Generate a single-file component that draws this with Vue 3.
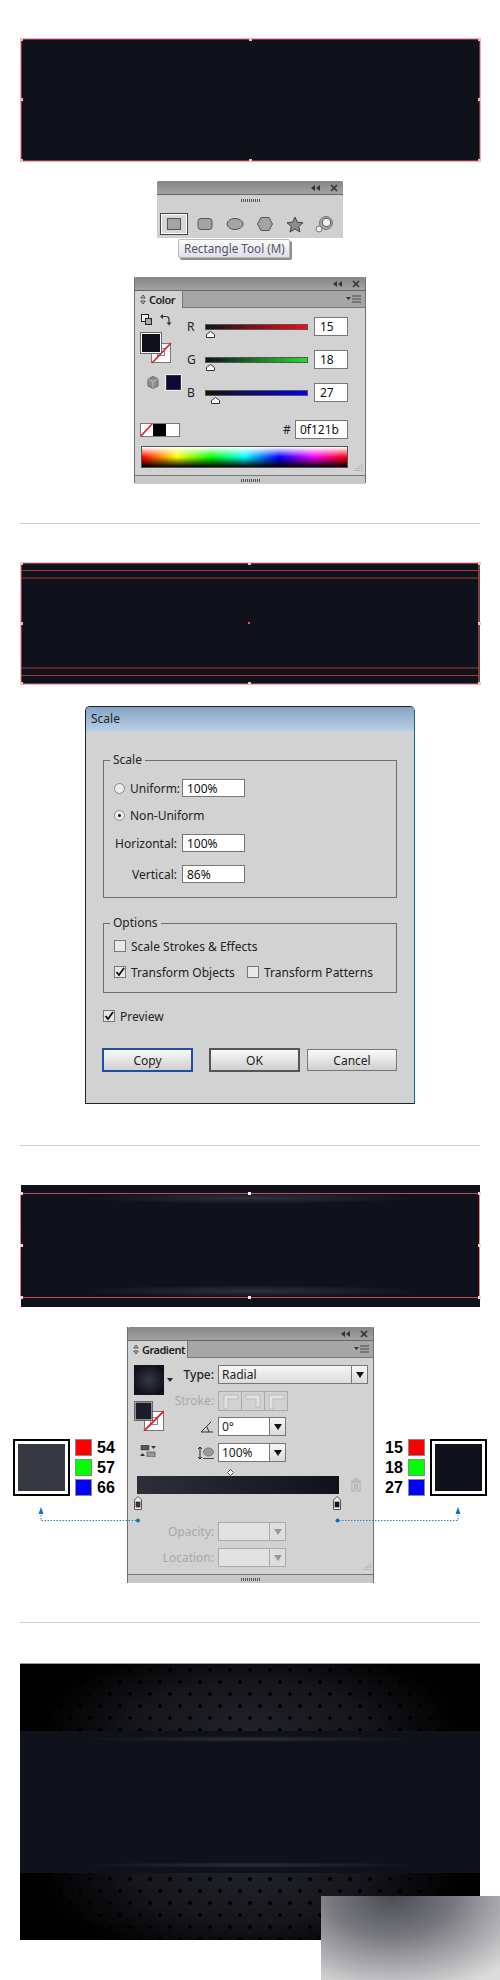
<script setup>
const sliders = [
  { label: 'R', value: '15', thumb: 1, track: 'linear-gradient(90deg,#0f121b,#ff0a14)' },
  { label: 'G', value: '18', thumb: 1, track: 'linear-gradient(90deg,#0f0f1b,#22e02a)' },
  { label: 'B', value: '27', thumb: 6, track: 'linear-gradient(90deg,#141400,#0000ff)' },
]
const leftVals = [['54', '#ff0000'], ['57', '#00ff00'], ['66', '#0000ff']]
const rightVals = [['15', '#ff0000'], ['18', '#00ff00'], ['27', '#0000ff']]
</script>

<template>
  <div class="page">
    <!-- Step 1 -->
    <div class="art art1">
      <svg class="sel" width="461" height="124" viewBox="0 0 461 124">
        <rect x="1" y="1" width="459" height="122" fill="none" stroke="#e8606a" />
        <g fill="#f6b9b9">
          <rect x="0" y="0" width="3" height="3" /><rect x="229" y="0" width="3" height="3" /><rect x="458" y="0" width="3" height="3" />
          <rect x="0" y="60" width="3" height="3" /><rect x="458" y="60" width="3" height="3" />
          <rect x="0" y="121" width="3" height="3" /><rect x="229" y="121" width="3" height="3" /><rect x="458" y="121" width="3" height="3" />
        </g>
      </svg>
    </div>

    <div class="tools">
      <div class="ptitle">
        <svg width="34" height="10" viewBox="0 0 34 10"><path d="M5 5l4-3v6zM10 5l4-3v6z" fill="#333" /><path d="M25 2l6 6M31 2l-6 6" stroke="#333" stroke-width="1.6" /></svg>
      </div>
      <div class="tgrip"><i class="grip"></i></div>
      <div class="tool-row">
        <span class="tool on"><svg width="16" height="14" viewBox="0 0 16 14"><rect x="1.5" y="1.5" width="13" height="11" fill="#a4a4a4" stroke="#555" /></svg></span>
        <span class="tool"><svg width="18" height="14" viewBox="0 0 18 14"><rect x="2" y="1.5" width="14" height="11" rx="3" fill="#a4a4a4" stroke="#555" /></svg></span>
        <span class="tool"><svg width="18" height="14" viewBox="0 0 18 14"><ellipse cx="9" cy="7" rx="8" ry="5.5" fill="#a4a4a4" stroke="#555" /></svg></span>
        <span class="tool"><svg width="18" height="16" viewBox="0 0 18 16"><path d="M5 1.5h8l3.5 6.5-3.5 6.5H5L1.500 8z" fill="#a4a4a4" stroke="#555" /></svg></span>
        <span class="tool"><svg width="18" height="17" viewBox="0 0 18 17"><path d="M9 1l2.300 5.200 5.700.5-4.300 3.700 1.300 5.600L9 13l-5 3 1.300-5.600L1 6.700l5.700-.5z" fill="#8d8d8d" stroke="#444" /></svg></span>
        <span class="tool"><svg width="20" height="18" viewBox="0 0 20 18"><circle cx="11" cy="8" r="6.500" fill="#a8a8a8" stroke="#777" /><circle cx="11.500" cy="7.500" r="4.200" fill="#eee" stroke="#555" /><circle cx="4" cy="14" r="3" fill="#eee" stroke="#777" /></svg></span>
      </div>
      <div class="tooltip">Rectangle Tool (M)</div>
    </div>

    <!-- Color panel -->
    <div class="panel color">
      <div class="ptitle">
        <svg width="34" height="10" viewBox="0 0 34 10"><path d="M5 5l4-3v6zM10 5l4-3v6z" fill="#333" /><path d="M25 2l6 6M31 2l-6 6" stroke="#333" stroke-width="1.6" /></svg>
      </div>
      <div class="ptabs">
        <div class="ptab ctab"><svg width="6" height="11" viewBox="0 0 6 11"><path d="M3 1L.8 4h4.400zM3 10L.8 7h4.400z" fill="none" stroke="#333" stroke-width=".8" /></svg>Color</div>
        <svg class="pmenu" width="16" height="8" viewBox="0 0 16 8"><path d="M0 2h5L2.500 5z" fill="#333" /><path d="M6 1h9M6 4h9M6 7h9" stroke="#444" /></svg>
      </div>
      <div class="cbody">
        <div class="ctop">
          <div class="cleft">
            <svg width="44" height="79" viewBox="0 0 44 79">
              <rect x="5.500" y=".5" width="7" height="7" fill="#eee" stroke="#222" /><rect x="9.500" y="4.500" width="6" height="6" fill="#aaa" stroke="#222" />
              <path d="M26 2.500h4q3 0 3 3v3.500" fill="none" stroke="#333" stroke-width="1.200" />
              <path d="M24 2.500l3-2.500v5zM33 11.500l-2.500-3h5z" fill="#333" />
              <g transform="translate(0 3)">
                <rect x="15.500" y="26.500" width="19" height="19" fill="#fff" stroke="#777" />
                <rect x="21.500" y="31.500" width="7" height="7" fill="none" stroke="#888" />
                <path d="M16 46l19-20" stroke="#ee1c25" stroke-width="1.800" />
                <rect x="5.500" y="16.500" width="19" height="19" fill="#0f121b" stroke="#fff" stroke-width="1" />
                <rect x="4.500" y="15.500" width="21" height="21" fill="none" stroke="#666" />
              </g>
            </svg>
            <div class="gamut">
              <svg width="12" height="13" viewBox="0 0 12 13"><path d="M6 .5l5 2.500v7l-5 2.500-5-2.500v-7z" fill="#8c8c8c" stroke="#666" /><path d="M1 3l5 2.500 5-2.500M6 5.500v7" fill="none" stroke="#bbb" /></svg>
              <span class="navy"></span>
            </div>
          </div>
          <div class="sliders">
            <div v-for="s in sliders" :key="s.label" class="srow">
              <span class="slabel">{{ s.label }}</span>
              <span class="track" :style="{ background: s.track }">
                <svg class="thumb" :style="{ left: s.thumb + 'px' }" width="9" height="7" viewBox="0 0 9 7"><path d="M4.500.5l4 3v3h-8v-3z" fill="#fff" stroke="#333" /></svg>
              </span>
              <span class="field sfield">{{ s.value }}</span>
            </div>
          </div>
        </div>
        <div class="chex">
          <span class="minis">
            <svg width="40" height="14" viewBox="0 0 40 14">
              <rect width="40" height="14" fill="#fff" /><rect x="13" width="13" height="14" fill="#000" />
              <path d="M0 14L13 0" stroke="#ee1c25" stroke-width="1.600" />
              <rect x=".5" y=".5" width="39" height="13" fill="none" stroke="#777" />
            </svg>
          </span>
          <span class="hash">#</span>
          <span class="field hexf">0f121b</span>
        </div>
        <div class="cspec">
          <span class="spectrum"></span>
          <svg class="corner" width="9" height="9" viewBox="0 0 9 9"><path d="M7.500 1v.5M5 3.500V4M7.500 3.500V4M3 5.500V6M5 5.500V6M7.500 5.500V6M1 7.500V8M3 7.500V8M5 7.500V8M7.500 7.500V8" stroke="#666" /></svg>
        </div>
      </div>
      <div class="pfoot"><i class="grip"></i></div>
    </div>

    <div class="rule r1"></div>

    <!-- Step 2 -->
    <div class="art art2">
      <svg class="sel" width="461" height="123" viewBox="0 0 461 123">
        <rect x="1" y="1" width="458" height="121" fill="none" stroke="#e8707a" />
        <path d="M1 8.500h458M1 16h458M1 106h458M1 113.500h458" stroke="#a83a3c" stroke-width="1.200" />
        <rect x="228" y="60" width="2" height="2" fill="#ee5555" />
        <g fill="#f6c0c0">
          <rect x="0" y="0" width="3" height="3" /><rect x="228" y="0" width="3" height="3" /><rect x="458" y="0" width="3" height="3" />
          <rect x="0" y="60" width="3" height="3" /><rect x="458" y="60" width="3" height="3" />
          <rect x="0" y="120" width="3" height="3" /><rect x="228" y="120" width="3" height="3" /><rect x="458" y="120" width="3" height="3" />
        </g>
      </svg>
    </div>

    <!-- Scale dialog -->
    <div class="dialog">
      <div class="dtitle">Scale</div>
      <div class="dbody">
        <div class="group g1">
          <span class="legend">Scale</span>
          <div class="drow">
            <span class="radio"></span><span class="rlabel ru">Uniform:</span><span class="field dfield">100%</span>
          </div>
          <div class="drow mt9">
            <span class="radio"><i></i></span><span class="rlabel">Non-Uniform</span>
          </div>
          <div class="drow mt10">
            <span class="rlabel rr">Horizontal:</span><span class="field dfield">100%</span>
          </div>
          <div class="drow mt13">
            <span class="rlabel rr">Vertical:</span><span class="field dfield">86%</span>
          </div>
        </div>
        <div class="group g2">
          <span class="legend">Options</span>
          <div class="drow">
            <span class="check"></span><span class="rlabel">Scale Strokes &amp; Effects</span>
          </div>
          <div class="drow mt7">
            <span class="check"><svg width="10" height="10" viewBox="0 0 10 10"><path d="M1.500 5l2.500 3 5-7" fill="none" stroke="#111" stroke-width="1.800" /></svg></span>
            <span class="rlabel to">Transform Objects</span>
            <span class="check"></span><span class="rlabel">Transform Patterns</span>
          </div>
        </div>
        <div class="drow preview">
          <span class="check"><svg width="10" height="10" viewBox="0 0 10 10"><path d="M1.500 5l2.500 3 5-7" fill="none" stroke="#111" stroke-width="1.800" /></svg></span>
          <span class="rlabel">Preview</span>
        </div>
        <div class="dbtns">
          <button class="btn copy">Copy</button>
          <button class="btn ok">OK</button>
          <button class="btn cancel">Cancel</button>
        </div>
      </div>
    </div>

    <div class="rule r2"></div>

    <!-- Step 3 -->
    <div class="art art3">
      <svg class="sel" width="461" height="122" viewBox="0 0 461 122">
        <path d="M1 9.500h459M1 113.500h459" stroke="#c24a55" />
        <path d="M.5 9v104M459.500 9v104" stroke="#e8808a" />
        <g fill="#fbd4d4">
          <rect x="0" y="8" width="3" height="3" /><rect x="228" y="8" width="3" height="3" fill="#fff" /><rect x="458" y="8" width="3" height="3" />
          <rect x="0" y="60" width="3" height="3" /><rect x="458" y="60" width="3" height="3" />
          <rect x="0" y="112" width="3" height="3" /><rect x="228" y="112" width="3" height="3" fill="#fff" /><rect x="458" y="112" width="3" height="3" />
        </g>
      </svg>
    </div>

    <div class="gradrow">
      <div class="side left">
        <span class="big"><i class="b1"></i></span>
        <div class="chans">
          <div v-for="v in leftVals" :key="v[0]" class="chan"><span class="chip" :style="{ background: v[1] }"></span><b>{{ v[0] }}</b></div>
        </div>
      </div>

      <div class="panel gradient">
        <div class="ptitle">
          <svg width="34" height="10" viewBox="0 0 34 10"><path d="M5 5l4-3v6zM10 5l4-3v6z" fill="#333" /><path d="M25 2l6 6M31 2l-6 6" stroke="#333" stroke-width="1.6" /></svg>
        </div>
        <div class="ptabs">
          <div class="ptab gtab"><svg width="6" height="11" viewBox="0 0 6 11"><path d="M3 1L.8 4h4.400zM3 10L.8 7h4.400z" fill="none" stroke="#333" stroke-width=".8" /></svg>Gradient</div>
          <svg class="pmenu" width="16" height="8" viewBox="0 0 16 8"><path d="M0 2h5L2.500 5z" fill="#333" /><path d="M6 1h9M6 4h9M6 7h9" stroke="#444" /></svg>
        </div>
        <div class="gbody">
          <div class="gtop">
            <div class="gleft">
              <div class="gprev"><span class="gswatch"></span><svg width="6" height="4" viewBox="0 0 6 4"><path d="M0 0h6L3 4z" fill="#222" /></svg></div>
              <svg class="gfs" width="30" height="30" viewBox="0 0 30 30">
                <rect x="10.500" y="10.500" width="19" height="19" fill="#fff" stroke="#777" />
                <rect x="16.500" y="16.500" width="7" height="7" fill="none" stroke="#888" />
                <path d="M10 30l20-20" stroke="#ee1c25" stroke-width="1.800" />
                <rect x=".5" y=".5" width="18" height="19" fill="#fff" stroke="#666" />
                <rect x="1.500" y="1.500" width="16" height="17" fill="#1a1d28" />
              </svg>
              <svg class="gswap" width="16" height="12" viewBox="0 0 16 12">
                <rect x="1" y="0" width="8" height="5" fill="#555" stroke="#333" stroke-width=".5" /><path d="M11 1h5l-2.500 3z" fill="#333" />
                <rect x="7" y="7" width="8" height="5" fill="#999" stroke="#333" stroke-width=".5" /><path d="M0 11h5L2.500 8z" fill="#333" />
              </svg>
            </div>
            <div class="gright">
              <div class="grow"><span class="glabel blk">Type:</span>
                <span class="combo wide"><span class="cval">Radial</span><span class="carrow"><i></i></span></span></div>
              <div class="grow"><span class="glabel off">Stroke:</span>
                <span class="strokes">
                  <svg width="70" height="20" viewBox="0 0 70 20">
                    <rect x=".5" y=".5" width="69" height="19" fill="#d2d2d2" stroke="#aaa" />
                    <path d="M23.500 1v18M46.500 1v18" stroke="#aaa" />
                    <path d="M6 18V4h14v4H10v10zM28 4h14v12h-4V8H28zM51 4h15v4H55v10h-4z" fill="#e2e2e2" stroke="#bbb" />
                  </svg>
                </span></div>
              <div class="grow"><span class="glabel icon"><svg width="14" height="12" viewBox="0 0 14 12"><path d="M13 11H1L11 1M7 6l2 5" fill="none" stroke="#333" /></svg></span>
                <span class="combo"><span class="cval">0°</span><span class="carrow"><i></i></span></span></div>
              <div class="grow"><span class="glabel icon"><svg width="16" height="14" viewBox="0 0 16 14"><path d="M2 1v12M0 3l2-2 2 2M0 11l2 2 2-2" fill="none" stroke="#222" /><ellipse cx="10.500" cy="6" rx="5" ry="4" fill="#9a9a9a" stroke="#777" /><path d="M5 12.500h11" stroke="#444" /></svg></span>
                <span class="combo"><span class="cval">100%</span><span class="carrow"><i></i></span></span></div>
            </div>
          </div>
          <div class="gbarrow">
            <div class="gbar">
              <svg class="diamond" width="7" height="7" viewBox="0 0 7 7"><path d="M3.500.5l3 3-3 3-3-3z" fill="#fff" stroke="#555" /></svg>
              <svg class="stop s1" width="8" height="14" viewBox="0 0 8 14"><path d="M.5 13.500V4L4 .5 7.500 4v9.500z" fill="#eee" stroke="#555" /><rect x="2" y="6" width="4" height="5" fill="#363942" stroke="#222" stroke-width=".7" /></svg>
              <svg class="stop s2" width="8" height="14" viewBox="0 0 8 14"><path d="M.5 13.500V4L4 .5 7.500 4v9.500z" fill="#eee" stroke="#555" /><rect x="2" y="6" width="4" height="5" fill="#0f121b" stroke="#222" stroke-width=".7" /></svg>
            </div>
            <svg class="trash" width="12" height="14" viewBox="0 0 12 14"><path d="M1 3h10M4 3V1h4v2M2 4h8v9H2zM4.500 5.500v6M6 5.500v6M7.500 5.500v6" fill="none" stroke="#aeaeae" /></svg>
          </div>
          <div class="gdis">
            <div class="grow"><span class="glabel off">Opacity:</span><span class="combo dis"><span class="cval"></span><span class="carrow"><i></i></span></span></div>
            <div class="grow"><span class="glabel off">Location:</span><span class="combo dis"><span class="cval"></span><span class="carrow"><i></i></span></span></div>
          </div>
          <svg class="corner gcorner" width="9" height="9" viewBox="0 0 9 9"><path d="M7.500 1v.5M5 3.500V4M7.500 3.500V4M3 5.500V6M5 5.500V6M7.500 5.500V6M1 7.500V8M3 7.500V8M5 7.500V8M7.500 7.500V8" stroke="#666" /></svg>
        </div>
        <div class="pfoot"><i class="grip"></i></div>
      </div>

      <div class="side right">
        <div class="chans">
          <div v-for="v in rightVals" :key="v[0]" class="chan"><b>{{ v[0] }}</b><span class="chip" :style="{ background: v[1] }"></span></div>
        </div>
        <span class="big"><i class="b2"></i></span>
      </div>

      <svg class="links" width="500" height="256" viewBox="0 0 500 256">
        <g fill="none" stroke="#2b86c5" stroke-width="1" stroke-dasharray="1.500 1.500">
          <path d="M41 188v5.500h97" />
          <path d="M458 188v5.500h-121" />
        </g>
        <g fill="#1470b8">
          <path d="M41 180l2.500 7h-5z" /><path d="M458 180l2.500 7h-5z" />
          <circle cx="138" cy="193.500" r="2" /><circle cx="337.500" cy="193.500" r="2" />
        </g>
      </svg>
    </div>

    <div class="rule r3"></div>

    <!-- Final -->
    <div class="final">
      <div class="metal top"></div>
      <div class="band"></div>
      <div class="metal bottom"></div>
    </div>

    <div class="blur"></div>
  </div>
</template>

<style>
html, body { margin: 0; background: #fff; }
</style>

<style scoped>
.page {
  position: relative;
  width: 500px;
  height: 1980px;
  overflow: hidden;
  background: #fff;
  font-family: "Noto Sans", "Liberation Sans", sans-serif;
  font-size: 12px;
  color: #222;
}
.art { position: relative; background: #0f121b; margin-left: 21px; width: 459px; }
.sel { position: absolute; left: -1px; top: -1px; }
.art1 { margin-top: 39px; height: 122px; }
.art2 { margin-top: 39px; height: 121px; }
.art3 {
  margin-top: 39px;
  height: 122px;
  background:
    radial-gradient(ellipse 170px 6px at 50% 13px, #2e313b, transparent),
    radial-gradient(ellipse 170px 6px at 50% 106px, #2e313b, transparent),
    #0f121b;
}
.rule { height: 1px; margin-left: 20px; width: 460px; background: #cdcdcd; }
.r1 { margin-top: 40px; }
.r2 { margin-top: 41px; }
.r3 { margin-top: 39px; }

.ptitle {
  height: 14px;
  background: linear-gradient(#858585, #a3a3a3);
  border-bottom: 1px solid #666;
  box-sizing: border-box;
  display: flex;
  align-items: center;
  justify-content: flex-end;
  padding-right: 3px;
  border-radius: 2px 2px 0 0;
}
.grip {
  display: block;
  width: 19px;
  height: 3px;
  background: repeating-linear-gradient(90deg, #555 0 1px, transparent 1px 2px);
}

.tools {
  position: relative;
  margin: 20px 0 0 157px;
  width: 186px;
  height: 57px;
  background: #d0d0d0;
}
.tgrip { height: 18px; box-sizing: border-box; padding-top: 4px; display: flex; align-items: flex-start; justify-content: center; }
.tool-row { display: flex; padding-left: 3px; }
.tool { width: 30px; height: 22px; display: flex; align-items: center; justify-content: center; }
.tool.on { width: 28px; margin-right: 2px; box-sizing: border-box; background: #d8d8d8; border: 1px solid #444; box-shadow: inset 0 0 0 1px #fff; }
.tooltip {
  position: absolute;
  left: 21px;
  top: 58px;
  width: 112px;
  height: 19px;
  box-sizing: border-box;
  border: 1px solid #bbb;
  border-radius: 2px;
  background: linear-gradient(#fbfbfd, #dcdfee);
  box-shadow: 2px 2px 0 #8d8d8d;
  font-size: 11.700px;
  line-height: 17px;
  padding-left: 5px;
  color: #555;
  white-space: nowrap;
}

.panel {
  box-sizing: border-box;
  background: #d2d2d2;
  border: 1px solid #6f6f6f;
  border-top: 0;
  position: relative;
}
.ptabs {
  height: 17px;
  background: #a6a6a6;
  border-bottom: 1px solid #777;
  box-sizing: border-box;
  display: flex;
  justify-content: space-between;
}
.ptab {
  background: #d2d2d2;
  height: 17px;
  box-sizing: border-box;
  border-right: 1px solid #777;
  display: flex;
  align-items: center;
  gap: 3px;
  padding-left: 5px;
  font-size: 11px;
  letter-spacing: -.5px;
  font-weight: 600;
  color: #222;
}
.ptab svg { flex: none; }
.pmenu { margin: 4px 3px 0 0; }
.pfoot {
  height: 8px;
  border-top: 1px solid #777;
  background: #c8c8c8;
  display: flex;
  align-items: center;
  justify-content: center;
}

.color { margin: 39px 0 0 134px; width: 232px; height: 206px; }
.ctab { width: 48px; }
.cbody { height: 167px; box-sizing: border-box; padding: 9px 0 0 6px; }
.ctop { display: flex; }
.cleft { width: 40px; height: 85px; margin: -3px 0 3px -6px; display: flex; flex-direction: column; padding-left: 1px; }
.gamut { display: flex; align-items: center; gap: 7px; margin: -18px 0 0 11px; width: 44px; }
.navy { flex: none; width: 13px; height: 13px; background: #0a0a3a; border: 1px solid #333; box-shadow: 0 0 0 1px #f0f0f0; }
.sliders { display: flex; flex-direction: column; gap: 14px; margin-left: 5px; }
.srow { display: flex; align-items: center; height: 19px; }
.slabel { width: 24px; padding-left: 6px; box-sizing: border-box; font-size: 12px; }
.track { position: relative; width: 103px; height: 6px; box-shadow: 0 0 0 1px #555 inset; }
.thumb { position: absolute; top: 7px; }
.field {
  box-sizing: border-box;
  background: #fff;
  border: 1px solid #777;
  display: flex;
  align-items: center;
  padding-left: 5px;
  color: #111;
}
.sfield { width: 34px; height: 19px; margin-left: 6px; }
.chex { display: flex; align-items: center; margin-top: 18px; height: 19px; }
.minis { display: flex; margin-left: -1px; }
.hash { margin-left: 103px; width: 12px; }
.hexf { width: 53px; height: 19px; margin-left: 0; padding-left: 4px; }
.cspec { display: flex; align-items: flex-end; margin-top: 7px; }
.spectrum {
  width: 207px;
  height: 22px;
  box-sizing: border-box;
  border: 1px solid #555;
  background:
    linear-gradient(#fff 0%, rgba(255,255,255,0) 50%, rgba(0,0,0,0) 50%, #000 100%),
    linear-gradient(90deg, #f00 0%, #ff0 17%, #0f0 34%, #0ff 50%, #00f 67%, #f0f 84%, #f00 100%);
}
.corner { margin: 0 0 -4px 6px; }

.dialog {
  margin: 22px 0 0 85px;
  width: 330px;
  height: 398px;
  box-sizing: border-box;
  border: 1px solid #1a2430;
  border-right-color: #0f6d80;
  border-radius: 5px 5px 0 0;
  background: #d2d2d2;
}
.dtitle {
  height: 25px;
  box-sizing: border-box;
  padding: 4px 0 0 5px;
  background: linear-gradient(#84a4c4, #bbd2e8);
  border-radius: 4px 4px 0 0;
  line-height: 16px;
}
.dbody { padding: 28px 17px 0; }
.group { position: relative; box-sizing: border-box; border: 1px solid #6e6e6e; width: 294px; padding: 18px 0 0 10px; }
.g1 { height: 138px; }
.g2 { height: 70px; margin-top: 25px; padding-top: 13px; }
.legend { position: absolute; left: 6px; top: -9px; padding: 0 3px; background: #d2d2d2; line-height: 16px; }
.drow { display: flex; align-items: center; height: 18px; }
.mt7 { margin-top: 8px; }
.mt9 { margin-top: 9px; }
.mt10 { margin-top: 10px; }
.mt13 { margin-top: 13px; }
.radio {
  flex: none;
  width: 11px;
  height: 11px;
  box-sizing: border-box;
  border: 1px solid #8a8a8a;
  border-radius: 50%;
  background: #ececec;
  display: flex;
  align-items: center;
  justify-content: center;
  margin-right: 5px;
}
.radio i { width: 3px; height: 3px; border-radius: 50%; background: #111; }
.rlabel { white-space: nowrap; }
.ru { width: 52px; }
.rr { width: 63px; text-align: right; margin-right: 5px; }
.dfield { width: 63px; height: 18px; padding-left: 4px; }
.check {
  flex: none;
  width: 12px;
  height: 12px;
  box-sizing: border-box;
  border: 1px solid #777;
  background: #e8e8e8;
  display: flex;
  align-items: center;
  justify-content: center;
  margin-right: 5px;
}
.to { width: 116px; }
.preview { margin-top: 14px; }
.dbtns { display: flex; align-items: center; margin: 23px 0 0 -1px; }
.btn {
  box-sizing: border-box;
  height: 24px;
  width: 91px;
  padding: 0;
  background: linear-gradient(#fafafa, #cfcfcf);
  font: inherit;
  color: #222;
}
.copy { border: 2px solid #1f4fa0; }
.ok { border: 2px solid #555; margin-left: 16px; }
.cancel { border: 1px solid #777; height: 22px; width: 90px; margin-left: 7px; }

.gradrow { position: relative; display: flex; margin-top: 20px; height: 256px; }
.gradient { width: 247px; height: 256px; flex: none; }
.gtab { width: 60px; }
.gbody { position: relative; height: 216px; box-sizing: border-box; padding: 7px 0 0 6px; }
.gtop { display: flex; }
.gleft { width: 49px; flex: none; }
.gprev { display: flex; align-items: center; gap: 3px; }
.gswatch {
  width: 30px;
  height: 30px;
  background: radial-gradient(circle, #363942, #0f121b 75%);
}
.gfs { display: block; margin-top: 6px; }
.gswap { display: block; margin: 14px 0 0 6px; }
.gright { display: flex; flex-direction: column; gap: 7px; }
.grow { display: flex; align-items: center; height: 19px; }
.glabel { width: 31px; text-align: right; margin-right: 4px; white-space: nowrap; display: flex; justify-content: flex-end; }
.blk { font-weight: 500; }
.off { color: #a9a9a9; }
.strokes { display: flex; height: 20px; }
.combo {
  width: 68px;
  height: 19px;
  box-sizing: border-box;
  border: 1px solid #777;
  background: #fff;
  display: flex;
  align-items: center;
}
.cval { flex: 1; padding-left: 3px; }
.carrow { width: 15px; height: 17px; border-left: 1px solid #777; background: linear-gradient(#f6f6f6, #dcdcdc); display: flex; align-items: center; justify-content: center; }
.carrow i { width: 0; height: 0; border: 4px solid transparent; border-top: 6px solid #111; border-bottom: 0; }
.wide { width: 150px; background: linear-gradient(#f6f6f6, #dcdcdc); }
.dis { background: #e2e2e2; border-color: #aaa; }
.dis .carrow { border-color: #aaa; background: #dedede; }
.dis .carrow i { border-top-color: #999; }
.gbarrow { display: flex; align-items: center; margin: 14px 0 0 3px; }
.gbar {
  position: relative;
  width: 202px;
  height: 18px;
  background: linear-gradient(90deg, #2c2e38, #0f121b);
}
.diamond { position: absolute; left: 90px; top: -7px; }
.stop { position: absolute; top: 20px; }
.s1 { left: -3px; }
.s2 { left: 196px; }
.trash { margin-left: 11px; }
.gdis { display: flex; flex-direction: column; gap: 7px; margin: 28px 0 0 49px; }
.gcorner { position: absolute; right: 1px; bottom: 3px; margin: 0; }

.side { display: flex; padding-top: 112px; align-items: flex-start; box-sizing: border-box; height: 256px; flex: none; }
.left { width: 127px; padding-left: 13px; }
.right { width: 126px; padding-left: 6px; }
.big {
  flex: none;
  width: 57px;
  height: 57px;
  box-sizing: border-box;
  border: 2px solid #000;
  padding: 3px;
  background: #fff;
}
.big i { display: block; width: 47px; height: 47px; }
.b1 { background: #363942; }
.b2 { background: #0f121b; }
.chans { display: flex; flex-direction: column; gap: 3px; margin: 0 5px; }
.chan { display: flex; align-items: center; height: 17px; gap: 5px; font-family: "Liberation Sans", sans-serif; font-size: 16px; color: #000; }
.chip { flex: none; width: 17px; height: 17px; box-sizing: border-box; border: 1px solid #8a8a8a; }
.links { position: absolute; left: 0; top: 0; pointer-events: none; }

.final {
  margin: 40px 0 0 20px;
  width: 460px;
  height: 276px;
  display: flex;
  flex-direction: column;
  background: #000;
  border-top: 1px solid #9a9a9a;
  border-bottom: 1px solid #9a9a9a;
  box-sizing: border-box;
}
.metal { height: 67px; flex: none; }
.top {
  background:
    radial-gradient(ellipse 205px 90px at 50% 100%, rgba(0,0,0,0) 0%, rgba(0,0,0,.35) 55%, rgba(0,0,0,.96) 100%),
    radial-gradient(circle at 10px 6px, #000 1.600px, transparent 2px) 0 0 / 20px 24px,
    radial-gradient(circle at 10px 6px, #000 1.600px, transparent 2px) 10px 12px / 20px 24px,
    #21212a;
}
.bottom {
  height: 67px;
  background:
    radial-gradient(ellipse 205px 90px at 50% 0, rgba(0,0,0,0) 0%, rgba(0,0,0,.35) 55%, rgba(0,0,0,.96) 100%),
    radial-gradient(circle at 10px 6px, #000 1.600px, transparent 2px) 0 0 / 20px 24px,
    radial-gradient(circle at 10px 6px, #000 1.600px, transparent 2px) 10px 12px / 20px 24px,
    #21212a;
}
.band {
  height: 142px;
  flex: none;
  background:
    radial-gradient(ellipse 170px 3px at 50% 8px, #2d303a, transparent),
    radial-gradient(ellipse 170px 3px at 50% 134px, #2d303a, transparent),
    #0f121b;
}
.blur {
  position: absolute;
  left: 321px;
  top: 1896px;
  width: 179px;
  height: 84px;
  background: radial-gradient(ellipse 86% 120% at 40% 0%, #4c4c55 0%, #77777e 40%, #aaaaae 70%, #dcdcdc 100%);
}
</style>
